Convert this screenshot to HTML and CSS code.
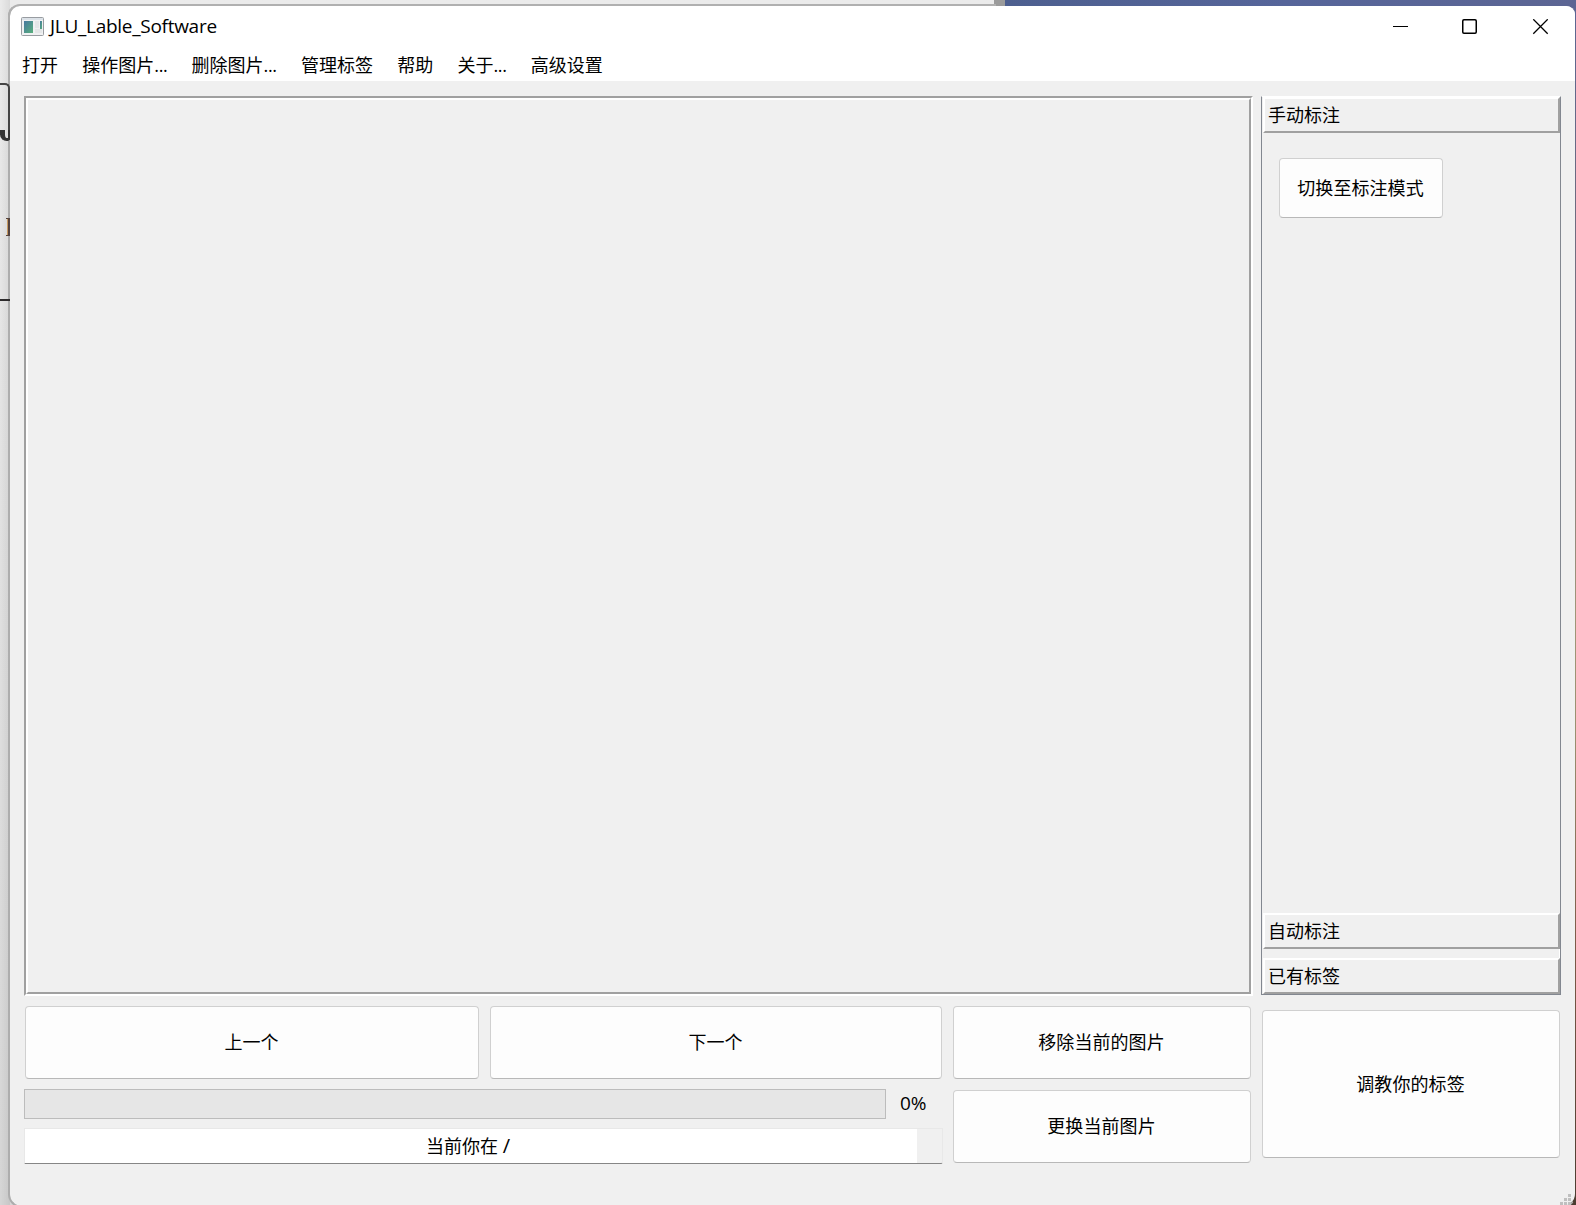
FILE: index.html
```html
<!DOCTYPE html>
<html lang="zh-CN">
<head>
<meta charset="utf-8">
<title>JLU_Lable_Software</title>
<link rel="stylesheet" href="styles.css">
</head>
<body>
<div class="desktop-strip"></div>
<div class="desktop-edge"></div>
<i class="page-mark mark-large"></i>
<i class="page-mark mark-foot"></i>
<i class="page-mark mark-small"></i>
<i class="page-mark mark-rule"></i>
<div class="window">
  <header class="titlebar">
    <svg class="app-icon" width="23" height="19" viewBox="0 0 23 19">
      <defs><linearGradient id="g" x1="0" y1="0" x2="1" y2="1"><stop offset="0" stop-color="#4878a0"/><stop offset="1" stop-color="#58b07c"/></linearGradient></defs>
      <rect x=".5" y=".5" width="22" height="18" rx="1" fill="#f0f1f2" stroke="#989ca1"/>
      <path d="M1 2h21" stroke="#dce2e8" stroke-width="2"/>
      <rect x="3" y="4" width="9" height="12" fill="url(#g)"/>
      <path d="M14 4h4v7h-4zM14 12h7v4h-7z" fill="#e4e6e7"/>
      <rect x="19" y="4" width="2" height="8" fill="url(#g)"/>
    </svg>
    <span class="title">JLU_Lable_Software</span>
    <svg class="controls" width="158" height="16" viewBox="0 0 158 16" fill="none" stroke="#000">
      <path d="M0 7.5h15"/>
      <rect x="69.75" y=".75" width="13.5" height="13.5" rx="1.2" stroke-width="1.5"/>
      <path d="M140.3.3l14.4 14.4M154.700.3l-14.4 14.4" stroke-width="1.3"/>
    </svg>
  </header>
  <nav class="menu">
    <span>打开</span><span>操作图片<b>...</b></span><span>删除图片<b>...</b></span><span>管理标签</span><span>帮助</span><span>关于<b>...</b></span><span>高级设置</span>
  </nav>
  <main class="content">
    <section class="left">
      <div class="canvas"><div class="canvas-inner"></div></div>
      <div class="bottom">
        <div class="nav-col">
          <div class="nav-buttons">
            <button class="btn prev">上一个</button>
            <button class="btn next">下一个</button>
          </div>
          <div class="progress"><div class="track"></div><span class="percent">0%</span></div>
          <div class="status"><div class="field">当前你在 <span class="slash">/</span></div></div>
        </div>
        <div class="image-col">
          <button class="btn">移除当前的图片</button>
          <button class="btn">更换当前图片</button>
        </div>
      </div>
    </section>
    <aside class="right">
      <div class="toolbox">
        <div class="tab">手动标注</div>
        <div class="tool-page"><button class="btn mode">切换至标注模式</button></div>
        <div class="tab">自动标注</div>
        <div class="tab-gap"></div>
        <div class="tab">已有标签</div>
      </div>
      <button class="btn train">调教你的标签</button>
    </aside>
  </main>
  <svg class="grip" width="11" height="11" viewBox="0 0 11 11" fill="#bfbfbf">
    <path d="M8 0h3v3H8zM4 4h3v3H4zM8 4h3v3H8zM0 8h3v3H0zM4 8h3v3H4zM8 8h3v3H8z"/>
  </svg>
</div>
</body>
</html>
```
FILE: styles.css
```css
* { box-sizing: border-box; }
html, body { margin: 0; height: 1205px; overflow: hidden; }
body {
  position: relative;
  width: 1576px;
  padding: 4px 0 0 8px;
  background: linear-gradient(90deg, #0000 0, #00000012 10px, #0000 10px), linear-gradient(#ebebeb, #e4e4e4 400px, #d6d6d6);
  font-family: "Open Sans", "Noto Sans CJK SC", sans-serif;
  font-size: 18px;
  color: #000;
}
.desktop-strip {
  position: absolute; left: 994px; top: 0; right: 0; height: 30px;
  background: linear-gradient(90deg, #9b9b9b 11px, #4d5f8f 11px, #56659a 50%, #5c6593);
}
.desktop-edge {
  position: absolute; right: 0; top: 20px; bottom: 0; width: 6px;
  background: linear-gradient(#5c6690, #6c6a80 15%, #857980 35%, #a09678 50%, #9a9070 60%, #7d5a48 78%, #4c3c30);
}
.page-mark { position: absolute; z-index: 2; left: 0; width: 10px; }
.mark-large { top: 83px; height: 57px; border: solid #444; border-width: 2px 2px 0 0; border-radius: 0 5px 0 0; }
.mark-foot { top: 130px; height: 11px; border: solid #333; border-width: 0 2px 3px 5px; border-radius: 0 0 4px 8px; }
.mark-small { left: 6px; top: 218px; width: 4px; height: 18px; border: solid #54433e; border-width: 1px 2px 1px 0; box-shadow: inset -1px 0 #c79a62; }
.mark-rule { top: 299px; height: 2px; background: #2c2a2b; }
.window {
  position: relative;
  width: 1568px; height: 1204px;
  border: 2px solid #adadad;
  border-right: 1px solid #0000;
  border-top-color: #0000;
  background: #f0f0f0 padding-box;
  border-radius: 12px 10px 14px 14px;
  display: flex; flex-direction: column;
}
.window::before {
  content: ""; position: absolute; left: -2px; top: -2px; width: 986px; height: 16px;
  border-top: 2px solid #b0b0b0; border-left: 2px solid #b0b0b0; border-radius: 12px 0 0 0;
}
.titlebar {
  display: flex; align-items: center;
  height: 41px; padding: 0 24px 0 11px;
  background: #fff; border-radius: 10px 9px 0 0;
}
.app-icon { margin-right: 6px; }
.title { font-size: 19px; letter-spacing: -.28px; padding-bottom: 2px; }
.controls { margin-left: auto; }
.menu {
  display: flex; gap: 24.3px; align-items: center;
  height: 34px; padding: 2px 12px 0; line-height: 26px;
  background: #fff; white-space: nowrap;
}
.menu b { font-weight: 400; letter-spacing: -.4px; }
.content { display: flex; gap: 8px; padding: 15px 14px 0; }
.left { width: 1229px; }
.canvas { height: 900px; border: 2px solid; border-color: #a0a0a0 #fff #fff #a0a0a0; }
.canvas-inner { height: 100%; border: 2px solid; border-color: #fff #a0a0a0 #a0a0a0 #fff; }
.bottom { display: flex; gap: 10px; padding: 10px 2px 0 0; }
.nav-col { width: 919px; }
.nav-buttons { display: flex; gap: 11px; padding: 0 1px; }
.btn {
  display: block; margin: 0; padding: 0 1px 3px 0; height: 73px;
  font: inherit; color: #000; text-align: center; letter-spacing: .08px;
  background: #fdfdfd; border: 1px solid #d0d0d0; border-bottom-color: #b8b8b8; border-radius: 4px;
}
.prev { width: 454px; }
.next { width: 452px; }
.progress { display: flex; align-items: center; height: 30px; margin-top: 10px; }
.track { width: 862px; height: 30px; margin-right: 14px; background: #e6e6e6; border: 1px solid #bcbcbc; }
.percent { font-size: 19px; padding-bottom: 2px; }
.status { height: 36px; margin-top: 9px; padding: 0 25px 0 0; border: 1px solid #e8e8e8; border-bottom-color: #868686; border-radius: 0 0 2px 0; }
.field { height: 34px; line-height: 34px; background: #fff; text-align: center; padding-right: 6px; }
.slash { font-size: 20px; line-height: 1; }
.image-col { display: flex; flex-direction: column; gap: 11px; width: 298px; }
.right { width: 300px; }
.toolbox {
  display: flex; flex-direction: column;
  height: 899px; padding: 0 0 0 1px;
  border: 1px solid #828790; border-top-color: #fff;
}
.tab {
  height: 36px; padding-left: 3px; line-height: 32px;
  border: 2px solid; border-color: #fff #a0a0a0 #a0a0a0 #fff;
}
.tool-page { flex: 1; padding: 25px 0 0 16px; }
.tab-gap { height: 9px; border-right: 1px solid #fff; }
.mode { width: 164px; height: 60px; }
.train { width: 298px; height: 148px; margin: 15px 0 0 1px; }
.grip { position: absolute; right: 4px; bottom: 1px; }
```
